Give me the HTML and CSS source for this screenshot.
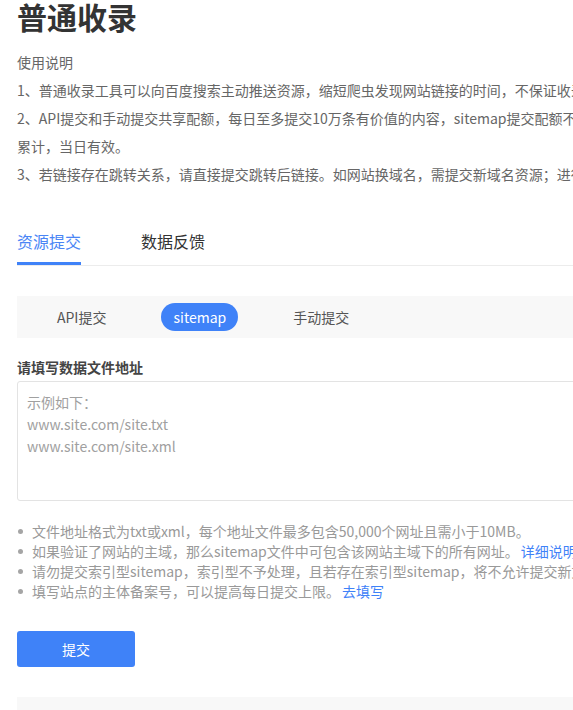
FILE: index.html
```html
<!DOCTYPE html>
<html lang="zh-CN">
<head>
<meta charset="utf-8">
<title>普通收录</title>
<link rel="stylesheet" href="styles.css">
</head>
<body>
<div class="page">
  <h1 class="title">普通收录</h1>
  <div class="intro">
    <p>使用说明</p>
    <p>1、普通收录工具可以向百度搜索主动推送资源，缩短爬虫发现网站链接的时间，不保证收录和展现效果。</p>
    <p>2、API提交和手动提交共享配额，每日至多提交10万条有价值的内容，sitemap提交配额不与其他方式共享，具体配额以站点页面显示数据为准。配额不可<br>累计，当日有效。</p>
    <p>3、若链接存在跳转关系，请直接提交跳转后链接。如网站换域名，需提交新域名资源；进行闭站保护的网站，请先取消闭站保护。</p>
  </div>

  <div class="tabs">
    <div class="tab active">资源提交</div>
    <div class="tab">数据反馈</div>
  </div>

  <div class="methods">
    <div class="method">API提交</div>
    <div class="method active">sitemap</div>
    <div class="method">手动提交</div>
  </div>

  <div class="label">请填写数据文件地址</div>
  <textarea class="input" placeholder="示例如下：&#10;www.site.com/site.txt&#10;www.site.com/site.xml"></textarea>

  <ul class="notes">
    <li>文件地址格式为txt或xml，每个地址文件最多包含50,000个网址且需小于10MB。</li>
    <li>如果验证了网站的主域，那么sitemap文件中可包含该网站主域下的所有网址。<a class="link" href="#">详细说明</a></li>
    <li>请勿提交索引型sitemap，索引型不予处理，且若存在索引型sitemap，将不允许提交新文件。</li>
    <li>填写站点的主体备案号，可以提高每日提交上限。<a class="link" href="#">去填写</a></li>
  </ul>

  <button class="submit">提交</button>

  <div class="result"></div>
</div>
</body>
</html>
```

FILE: styles.css
```css
html, body {
  margin: 0;
  padding: 0;
  background: #fff;
  overflow: hidden;
}

body {
  font-family: "Noto Sans CJK SC", "Noto Sans", sans-serif;
  color: #666;
  font-size: 14px;
}

.page {
  width: 1100px;
  padding-left: 17px;
}

.title {
  margin: 0 0 16px;
  font-size: 30px;
  line-height: 32px;
  font-weight: 700;
  color: #333;
}

.intro p {
  margin: 0;
  line-height: 28px;
  white-space: nowrap;
  color: #666;
}

.tabs {
  display: flex;
  gap: 60px;
  margin-top: 42px;
  border-bottom: 1px solid #ececec;
}

.tab {
  font-size: 16px;
  line-height: 22px;
  padding-bottom: 10px;
  border-bottom: 3px solid transparent;
  color: #333;
}

.tab.active {
  color: #4a85f5;
  border-bottom-color: #3f82f8;
}

.methods {
  display: flex;
  align-items: center;
  gap: 43px;
  margin-top: 30px;
  height: 42px;
  padding-left: 28px;
  background: #f8f8f8;
}

.method {
  height: 28px;
  line-height: 28px;
  padding: 0 12px;
  border-radius: 14px;
  color: #555;
}

.method.active {
  background: #3f82f8;
  color: #fff;
}

.label {
  margin-top: 19px;
  line-height: 20px;
  font-weight: 700;
  color: #444;
}

.input {
  display: block;
  box-sizing: border-box;
  width: 1000px;
  height: 120px;
  margin: 4px 0 0;
  padding: 9px 9px;
  border: 1px solid #e3e3e3;
  border-radius: 3px;
  font-family: inherit;
  font-size: 14px;
  line-height: 22px;
  resize: none;
  outline: none;
}

.input::placeholder {
  color: #a0a0a0;
}

.notes {
  list-style: none;
  margin: 20px 0 0;
  padding: 0;
}

.notes li {
  position: relative;
  padding-left: 15px;
  line-height: 20px;
  white-space: nowrap;
  color: #999;
}

.notes li::before {
  content: "";
  position: absolute;
  left: 1px;
  top: 8px;
  width: 5px;
  height: 5px;
  border-radius: 50%;
  background: #a5a5a5;
}

.link {
  color: #3f82f8;
  text-decoration: none;
  margin-left: 2px;
}

.submit {
  display: block;
  margin-top: 30px;
  width: 118px;
  height: 36px;
  border: none;
  border-radius: 3px;
  background: #3f82f8;
  color: #fff;
  font-family: inherit;
  font-size: 14px;
}

.result {
  margin-top: 30px;
  height: 200px;
  background: #f8f8f8;
}
```
